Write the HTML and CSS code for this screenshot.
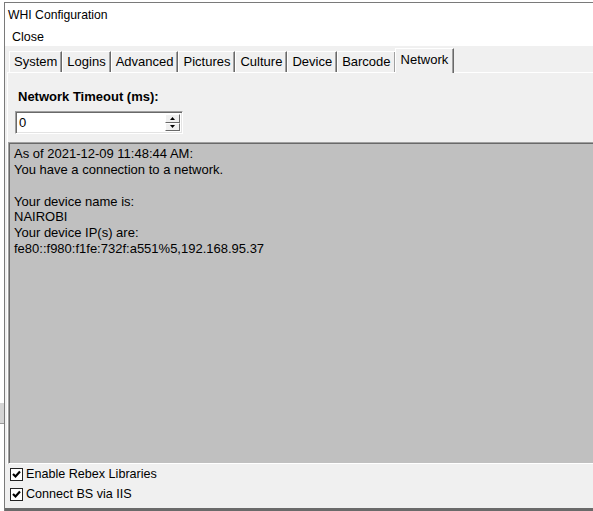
FILE: index.html
```html
<!DOCTYPE html>
<html>
<head>
<meta charset="utf-8">
<title>WHI Configuration</title>
<link rel="stylesheet" href="styles.css">
</head>
<body>
<div class="screen">
  <div class="backdrop">
    <div class="bd-band"></div>
  </div>
  <div class="window">
    <div class="titlebar">WHI Configuration</div>
    <div class="menubar"><span class="menu-item">Close</span></div>
    <div class="tabctrl">
      <div class="tabs">
        <div class="tab">System</div>
        <div class="tab">Logins</div>
        <div class="tab">Advanced</div>
        <div class="tab">Pictures</div>
        <div class="tab">Culture</div>
        <div class="tab">Device</div>
        <div class="tab">Barcode</div>
        <div class="tab active">Network</div>
      </div>
      <div class="panel">
        <div class="field-label">Network Timeout (ms):</div>
        <div class="spin">
          <div class="spin-value">0</div>
          <div class="spin-btns">
            <div class="spin-btn"><svg width="5" height="3" viewBox="0 0 5 3"><path d="M2.5 0 L5 3 L0 3 Z" fill="#000"/></svg></div>
            <div class="spin-btn"><svg width="5" height="3" viewBox="0 0 5 3"><path d="M0 0 L5 0 L2.5 3 Z" fill="#000"/></svg></div>
          </div>
        </div>
        <div class="status">
          <div class="line">As of 2021-12-09 11:48:44 AM:</div>
          <div class="line">You have a connection to a network.</div>
          <div class="line">&nbsp;</div>
          <div class="line">Your device name is:</div>
          <div class="line">NAIROBI</div>
          <div class="line">Your device IP(s) are:</div>
          <div class="line">fe80::f980:f1fe:732f:a551%5,192.168.95.37</div>
        </div>
      </div>
      <div class="checks">
        <label class="check"><span class="box"><svg width="11" height="11" viewBox="0 0 11 11"><path d="M2 5 L4.5 7.5 L9 2.5" fill="none" stroke="#000" stroke-width="2.2"/></svg></span>Enable Rebex Libraries</label>
        <label class="check"><span class="box"><svg width="11" height="11" viewBox="0 0 11 11"><path d="M2 5 L4.5 7.5 L9 2.5" fill="none" stroke="#000" stroke-width="2.2"/></svg></span>Connect BS via IIS</label>
      </div>
    </div>
  </div>
</div>
</body>
</html>
```
FILE: styles.css
```css
html, body {
  margin: 0;
  padding: 0;
  background: #ffffff;
}
body {
  font-family: "Liberation Sans", Arial, sans-serif;
  font-size: 13px;
  color: #000;
}
.screen {
  width: 593px;
  height: 511px;
  overflow: hidden;
  display: flex;
}
.backdrop {
  width: 4px;
  flex: none;
  background: #ffffff;
  display: flex;
  flex-direction: column;
  padding-top: 403px;
  box-sizing: border-box;
}
.bd-band {
  height: 20px;
  background: #d4d4d4;
  border-bottom: 1px solid #999;
}
.window {
  flex: 1;
  margin-top: 2px;
  border-top: 1px solid #7a7a7a;
  border-left: 1px solid #7a7a7a;
  display: flex;
  flex-direction: column;
  min-width: 0;
}
.titlebar {
  height: 24px;
  line-height: 24px;
  padding-left: 3px;
  background: #fff;
  font-size: 12.2px;
  white-space: nowrap;
}
.menubar {
  height: 19px;
  background: #fff;
  display: flex;
  align-items: center;
  padding-left: 7px;
  font-size: 12.5px;
}
.tabctrl {
  flex: 1;
  background: #f0f0f0;
  display: flex;
  flex-direction: column;
  border-bottom: 3px solid #6a6a6a;
}
.tabs {
  display: flex;
  align-items: flex-end;
  padding-left: 4px;
  height: 26px;
  box-sizing: border-box;
  font-size: 13px;
}
.tab {
  height: 21px;
  line-height: 20px;
  padding: 0 4px 0 4px;
  box-sizing: border-box;
  border-top: 1px solid #ffffff;
  border-left: 1px solid #ffffff;
  border-right: 1px solid #696969;
  box-shadow: inset -1px 0 0 #a0a0a0;
  white-space: nowrap;
}
.tab.active {
  height: 25px;
  line-height: 22px;
  padding: 0 5px;
  margin-left: -1px;
  position: relative;
  top: 1px;
  background: #f0f0f0;
  z-index: 1;
}
.panel {
  flex: 1;
  border-top: 1px solid #ffffff;
  border-left: 1px solid #ffffff;
  margin-left: 2px;
  display: flex;
  flex-direction: column;
  padding: 16px 0 0 0;
  min-height: 0;
}
.field-label {
  font-weight: bold;
  padding-left: 10px;
  line-height: 15px;
}
.spin {
  margin: 7px 0 0 7px;
  width: 168px;
  height: 23px;
  box-sizing: border-box;
  background: #fff;
  border-top: 1px solid #a0a0a0;
  border-left: 1px solid #a0a0a0;
  border-right: 1px solid #ffffff;
  border-bottom: 1px solid #ffffff;
  box-shadow: inset 1px 1px 0 #696969, inset -1px -1px 0 #e3e3e3;
  display: flex;
  align-items: center;
  padding: 2px 2px 2px 3px;
}
.spin-value {
  flex: 1;
}
.spin-btns {
  width: 15px;
  height: 17px;
  display: flex;
  flex-direction: column;
}
.spin-btn {
  flex: 1;
  background: #f0f0f0;
  border-top: 1px solid #fff;
  border-left: 1px solid #fff;
  border-right: 1px solid #696969;
  border-bottom: 1px solid #696969;
  box-sizing: border-box;
  display: flex;
  align-items: center;
  justify-content: center;
}
.status {
  flex: 1;
  margin-top: 8px;
  background: #c0c0c0;
  border-top: 1px solid #a0a0a0;
  border-left: 1px solid #a0a0a0;
  border-bottom: 1px solid #ffffff;
  box-shadow: inset 1px 1px 0 #696969;
  padding: 3px 0 0 5px;
  white-space: nowrap;
}
.line {
  line-height: 15.85px;
}
.checks {
  display: flex;
  flex-direction: column;
  padding: 4px 0 7px 5px;
  gap: 7px;
  font-size: 12.6px;
}
.check {
  display: flex;
  align-items: center;
  height: 13px;
  line-height: 13px;
}
.box {
  width: 13px;
  height: 13px;
  box-sizing: border-box;
  border: 1px solid #222;
  background: #fff;
  display: flex;
  align-items: center;
  justify-content: center;
  margin-right: 3px;
}
```
